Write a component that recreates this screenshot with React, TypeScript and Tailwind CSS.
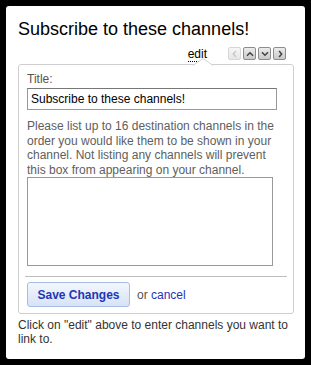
import React from 'react';

const font = { fontFamily: '"Liberation Sans", Arial, sans-serif' };

type Dir = 'left' | 'up' | 'down' | 'right';

const chevrons: Record<Dir, string> = {
  left: 'M6.5 3 L4 6 L6.5 9',
  up: 'M3 7.5 L6 4.5 L9 7.5',
  down: 'M3 4.5 L6 7.5 L9 4.5',
  right: 'M5.5 3 L8 6 L5.5 9',
};

function ArrowButton({ dir, disabled }: { dir: Dir; disabled?: boolean }) {
  return (
    <button
      className={`flex h-[13px] w-[13px] items-center justify-center rounded-[2px] border ${
        disabled
          ? 'border-[#d6d6d6] bg-gradient-to-b from-[#f6f6f6] to-[#e6e6e6]'
          : 'border-[#8c8c8c] bg-gradient-to-b from-[#ececec] to-[#c9c9c9]'
      }`}
    >
      <svg width="10" height="10" viewBox="0 0 12 12">
        <path
          d={chevrons[dir]}
          fill="none"
          stroke={disabled ? '#c8c8c8' : '#444'}
          strokeWidth="1.8"
          strokeLinecap="square"
        />
      </svg>
    </button>
  );
}

export default function App() {
  return (
    <div className="h-[365px] w-[311px] bg-black p-[6px]" style={font}>
      <div className="flex h-[353px] flex-col rounded-[3px] bg-white px-[12px] pt-[12px]">
        {/* Title */}
        <h1 className="text-[18px] leading-[22px] text-black">Subscribe to these channels!</h1>

        {/* Edit + arrows */}
        <div className="mt-[7px] flex h-[15px] items-start justify-end pr-[7px]">
          <span className="border-b border-dotted border-black text-[12px] leading-[14px] text-black">
            edit
          </span>
          <div className="ml-[21px] flex gap-[2px]">
            <ArrowButton dir="left" disabled />
            <ArrowButton dir="up" />
            <ArrowButton dir="down" />
            <ArrowButton dir="right" />
          </div>
        </div>

        {/* Edit panel */}
        <div className="relative mt-[2px] w-[276px] rounded-[3px] border border-[#cfcfcf] px-[8px] pt-[7px] pb-[6px]">
          <svg className="absolute -top-[7px] left-[174px]" width="20" height="8" viewBox="0 0 20 8">
            <path d="M0 7.5 L10 0.5 L20 7.5" fill="#fff" stroke="#d4d4d4" strokeWidth="1" />
          </svg>

          <label className="block text-[12px] leading-[15px] text-[#555]">Title:</label>
          <input
            defaultValue="Subscribe to these channels!"
            className="mt-[1px] block h-[22px] w-[250px] border border-[#999] border-t-[#777] px-[3px] text-[12px] text-black outline-none"
          />

          <p className="mt-[9px] text-[12px] leading-[14.5px] text-[#5e5e5e]">
            Please list up to 16 destination channels in the order you would like them to be shown in
            your channel. Not listing any channels will prevent this box from appearing on your channel.
          </p>
          <textarea className="block h-[89px] w-[246px] resize-none border border-[#999] outline-none" />

          <div className="mt-[10px] -mx-[2px] border-t border-[#bdbdbd]" />

          <div className="mt-[5px] flex items-center">
            <button className="h-[25px] w-[103px] rounded-[3px] border border-[#a8bde3] bg-gradient-to-b from-[#f3f7fd] to-[#d6e3f6] text-[12px] font-bold text-[#1f36b5]">
              Save Changes
            </button>
            <span className="ml-[7px] text-[12px] text-[#555]">
              or <span className="text-[#2233bb]">cancel</span>
            </span>
          </div>
        </div>

        {/* Footer note */}
        <p className="mt-[5px] text-[12px] leading-[13.5px] text-[#333]">
          Click on &quot;edit&quot; above to enter channels you want to link to.
        </p>
      </div>
    </div>
  );
}
